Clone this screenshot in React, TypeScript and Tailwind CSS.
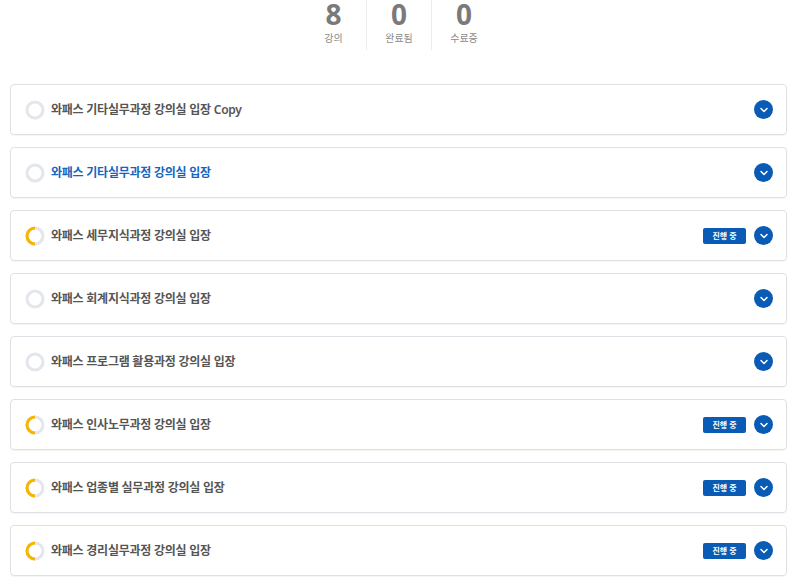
import { ChevronDown } from "lucide-react";

type Course = {
  title: string;
  active?: boolean;
  inProgress?: boolean;
};

const courses: Course[] = [
  { title: "와패스 기타실무과정 강의실 입장 Copy" },
  { title: "와패스 기타실무과정 강의실 입장", active: true },
  { title: "와패스 세무지식과정 강의실 입장", inProgress: true },
  { title: "와패스 회계지식과정 강의실 입장" },
  { title: "와패스 프로그램 활용과정 강의실 입장" },
  { title: "와패스 인사노무과정 강의실 입장", inProgress: true },
  { title: "와패스 업종별 실무과정 강의실 입장", inProgress: true },
  { title: "와패스 경리실무과정 강의실 입장", inProgress: true },
];

const stats = [
  { value: "8", label: "강의" },
  { value: "0", label: "완료됨" },
  { value: "0", label: "수료증" },
];

function ProgressRing({ half }: { half?: boolean }) {
  // 18px ring, orange arc over the left half when a course is started
  return (
    <svg width="20" height="20" viewBox="0 0 20 20" className="shrink-0">
      <circle cx="10" cy="10" r="8" fill="none" stroke="#e3e6eb" strokeWidth="3" />
      {half && (
        <path d="M10 2 A8 8 0 0 0 10 18" fill="none" stroke="#f7b500" strokeWidth="3" />
      )}
    </svg>
  );
}

export default function App() {
  return (
    <div
      className="w-[800px] h-[585px] overflow-hidden bg-white"
      style={{ fontFamily: '"Noto Sans", "Noto Sans CJK KR", sans-serif' }}
    >
      <div className="flex justify-center pr-[3px]">
        <div className="flex h-[50px]">
          {stats.map((s, i) => (
            <div
              key={s.label}
              className={`w-[65px] flex flex-col items-center ${
                i > 0 ? "border-l border-[#ececec]" : ""
              }`}
            >
              <span className="text-[28px] leading-[28px] font-bold text-[#7a7a7a]">
                {s.value}
              </span>
              <span className="text-[10px] leading-[14px] text-[#8a8a8a] mt-[3px]">
                {s.label}
              </span>
            </div>
          ))}
        </div>
      </div>

      <div className="ml-[10px] mr-[13px] mt-[34px] flex flex-col gap-[12px]">
        {courses.map((c) => (
          <div
            key={c.title}
            className="h-[51px] rounded-[4px] border border-[#dde1e6] shadow-[0_1px_1px_rgba(0,0,0,0.04)] flex items-center pl-[14px] pr-[13px]"
          >
            <ProgressRing half={c.inProgress} />
            <span
              className={`ml-[6px] text-[12px] font-semibold tracking-[-0.02em] ${
                c.active ? "text-[#1565c0]" : "text-[#555555]"
              }`}
            >
              {c.title}
            </span>
            <div className="ml-auto flex items-center gap-[8px]">
              {c.inProgress && (
                <span className="h-[16px] w-[43px] rounded-[2px] bg-[#0a5bb5] text-white text-[8px] font-bold flex items-center justify-center">
                  진행 중
                </span>
              )}
              <span className="w-[19px] h-[19px] rounded-full bg-[#0a5bb5] flex items-center justify-center">
                <ChevronDown size={12} strokeWidth={3} color="white" />
              </span>
            </div>
          </div>
        ))}
      </div>
    </div>
  );
}
